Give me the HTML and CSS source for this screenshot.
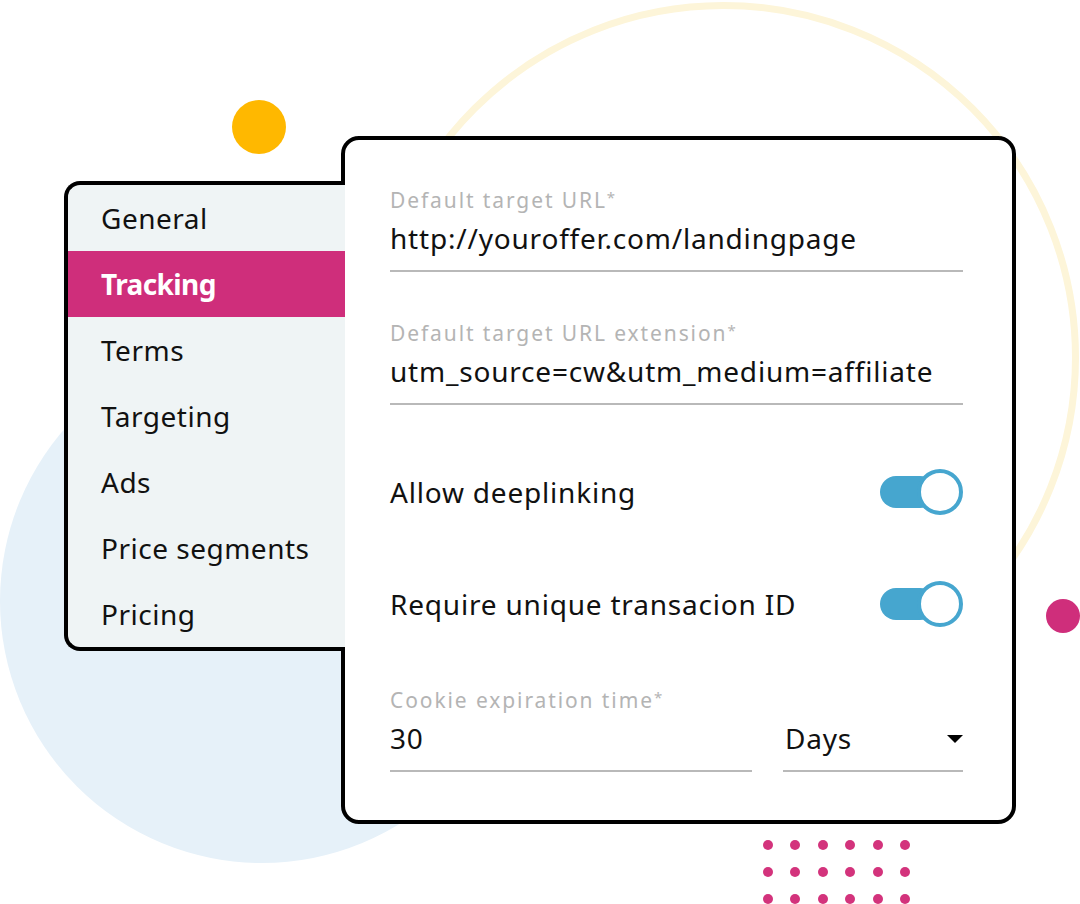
FILE: index.html
```html
<!DOCTYPE html>
<html lang="en">
<head>
<meta charset="utf-8">
<title>Offer settings – Tracking</title>
<link rel="stylesheet" href="styles.css">
</head>
<body>
<div class="stage">
  <div class="deco ring"></div>
  <div class="deco blob"></div>
  <div class="deco dot-yellow"></div>
  <div class="deco dot-pink"></div>
  <div class="deco dots">
    <span></span><span></span><span></span><span></span><span></span><span></span>
    <span></span><span></span><span></span><span></span><span></span><span></span>
    <span></span><span></span><span></span><span></span><span></span><span></span>
  </div>

  <div class="layout">
    <nav class="menu">
      <div class="menu-item">General</div>
      <div class="menu-item active">Tracking</div>
      <div class="menu-item">Terms</div>
      <div class="menu-item">Targeting</div>
      <div class="menu-item">Ads</div>
      <div class="menu-item">Price segments</div>
      <div class="menu-item">Pricing</div>
    </nav>

    <section class="panel">
      <div class="field">
        <div class="label">Default target URL<span class="req">*</span></div>
        <div class="value">http://youroffer.com/landingpage</div>
      </div>

      <div class="field field-2">
        <div class="label">Default target URL extension<span class="req">*</span></div>
        <div class="value">utm_source=cw&amp;utm_medium=affiliate</div>
      </div>

      <div class="toggle-row row-1">
        <span class="toggle-label">Allow deeplinking</span>
        <span class="toggle"><span class="track"></span><span class="knob"></span></span>
      </div>

      <div class="toggle-row row-2">
        <span class="toggle-label">Require unique transacion ID</span>
        <span class="toggle"><span class="track"></span><span class="knob"></span></span>
      </div>

      <div class="field field-3">
        <div class="label">Cookie expiration time<span class="req">*</span></div>
        <div class="split">
          <div class="value">30</div>
          <div class="value select"><span>Days</span><span class="caret"></span></div>
        </div>
      </div>
    </section>
  </div>
</div>
</body>
</html>
```

FILE: styles.css
```css
html, body {
  margin: 0;
  padding: 0;
  background: #ffffff;
}

body {
  font-family: "Noto Sans", "Open Sans", sans-serif;
  color: #111111;
}

.stage {
  position: relative;
  width: 1080px;
  height: 904px;
  overflow: hidden;
  background: #ffffff;
}

/* decorative shapes */
.deco {
  position: absolute;
  box-sizing: border-box;
}

.ring {
  left: 368px;
  top: 2px;
  width: 711px;
  height: 711px;
  border: 7px solid #fdf5d9;
  border-radius: 50%;
}

.blob {
  left: 0;
  top: 339px;
  width: 524px;
  height: 524px;
  border-radius: 50%;
  background: #e6f1f9;
}

.dot-yellow {
  left: 232px;
  top: 100px;
  width: 54px;
  height: 54px;
  border-radius: 50%;
  background: #ffb800;
}

.dot-pink {
  left: 1046px;
  top: 599px;
  width: 34px;
  height: 34px;
  border-radius: 50%;
  background: #cf2e7b;
}

.dots {
  left: 763px;
  top: 840px;
  display: grid;
  grid-template-columns: repeat(6, 10px);
  column-gap: 17.4px;
  row-gap: 17px;
}

.dots span {
  width: 10px;
  height: 10px;
  border-radius: 50%;
  background: #d3337c;
}

/* main layout */
.layout {
  position: relative;
  z-index: 1;
  display: flex;
  align-items: flex-start;
  padding: 136px 0 0 64px;
}

.menu {
  position: relative;
  z-index: 2;
  box-sizing: border-box;
  width: 281px;
  margin-top: 45px;
  margin-right: -4px;
  border: 4px solid #000000;
  border-right: none;
  border-radius: 16px 0 0 16px;
  background: #eff4f5;
}

.menu-item {
  height: 66px;
  line-height: 66px;
  padding-left: 33px;
  font-size: 28px;
  letter-spacing: 0.5px;
  color: #111111;
  white-space: nowrap;
}

.menu-item.active {
  background: #cf2e7b;
  color: #ffffff;
  font-weight: 700;
  letter-spacing: -0.6px;
}

.panel {
  position: relative;
  z-index: 1;
  box-sizing: border-box;
  width: 675px;
  height: 688px;
  padding: 44px 49px 0 45px;
  border: 4px solid #000000;
  border-radius: 18px;
  background: #ffffff;
}

.label {
  font-size: 21px;
  line-height: 26px;
  letter-spacing: 1.9px;
  color: #b4b4b4;
  white-space: nowrap;
}

.req {
  font-size: 15px;
  vertical-align: 5px;
  letter-spacing: 0;
}

.value {
  margin-top: 7px;
  padding-bottom: 14px;
  border-bottom: 2px solid #b9b9b9;
  font-size: 28px;
  line-height: 36px;
  letter-spacing: 0.8px;
  color: #111111;
  white-space: nowrap;
}

.field-2 {
  margin-top: 45px;
}

.toggle-row {
  display: flex;
  align-items: center;
  justify-content: space-between;
  height: 48px;
}

.row-1 {
  margin-top: 63px;
}

.row-2 {
  margin-top: 64px;
}

.toggle-label {
  font-size: 28px;
  letter-spacing: 0.8px;
  color: #111111;
}

.toggle {
  display: flex;
  align-items: center;
}

.track {
  width: 56px;
  height: 32px;
  border-radius: 16px;
  background: #46a6cf;
}

.knob {
  box-sizing: border-box;
  width: 46px;
  height: 46px;
  margin-left: -19px;
  border: 4px solid #46a6cf;
  border-radius: 50%;
  background: #ffffff;
}

.field-3 {
  margin-top: 56px;
}

.split {
  display: grid;
  grid-template-columns: 1fr 180px;
  column-gap: 31px;
}

.select {
  display: flex;
  align-items: center;
  justify-content: space-between;
  padding-left: 2px;
}

.caret {
  width: 0;
  height: 0;
  border-left: 8px solid transparent;
  border-right: 8px solid transparent;
  border-top: 8px solid #000000;
  margin-top: 2px;
}
```
